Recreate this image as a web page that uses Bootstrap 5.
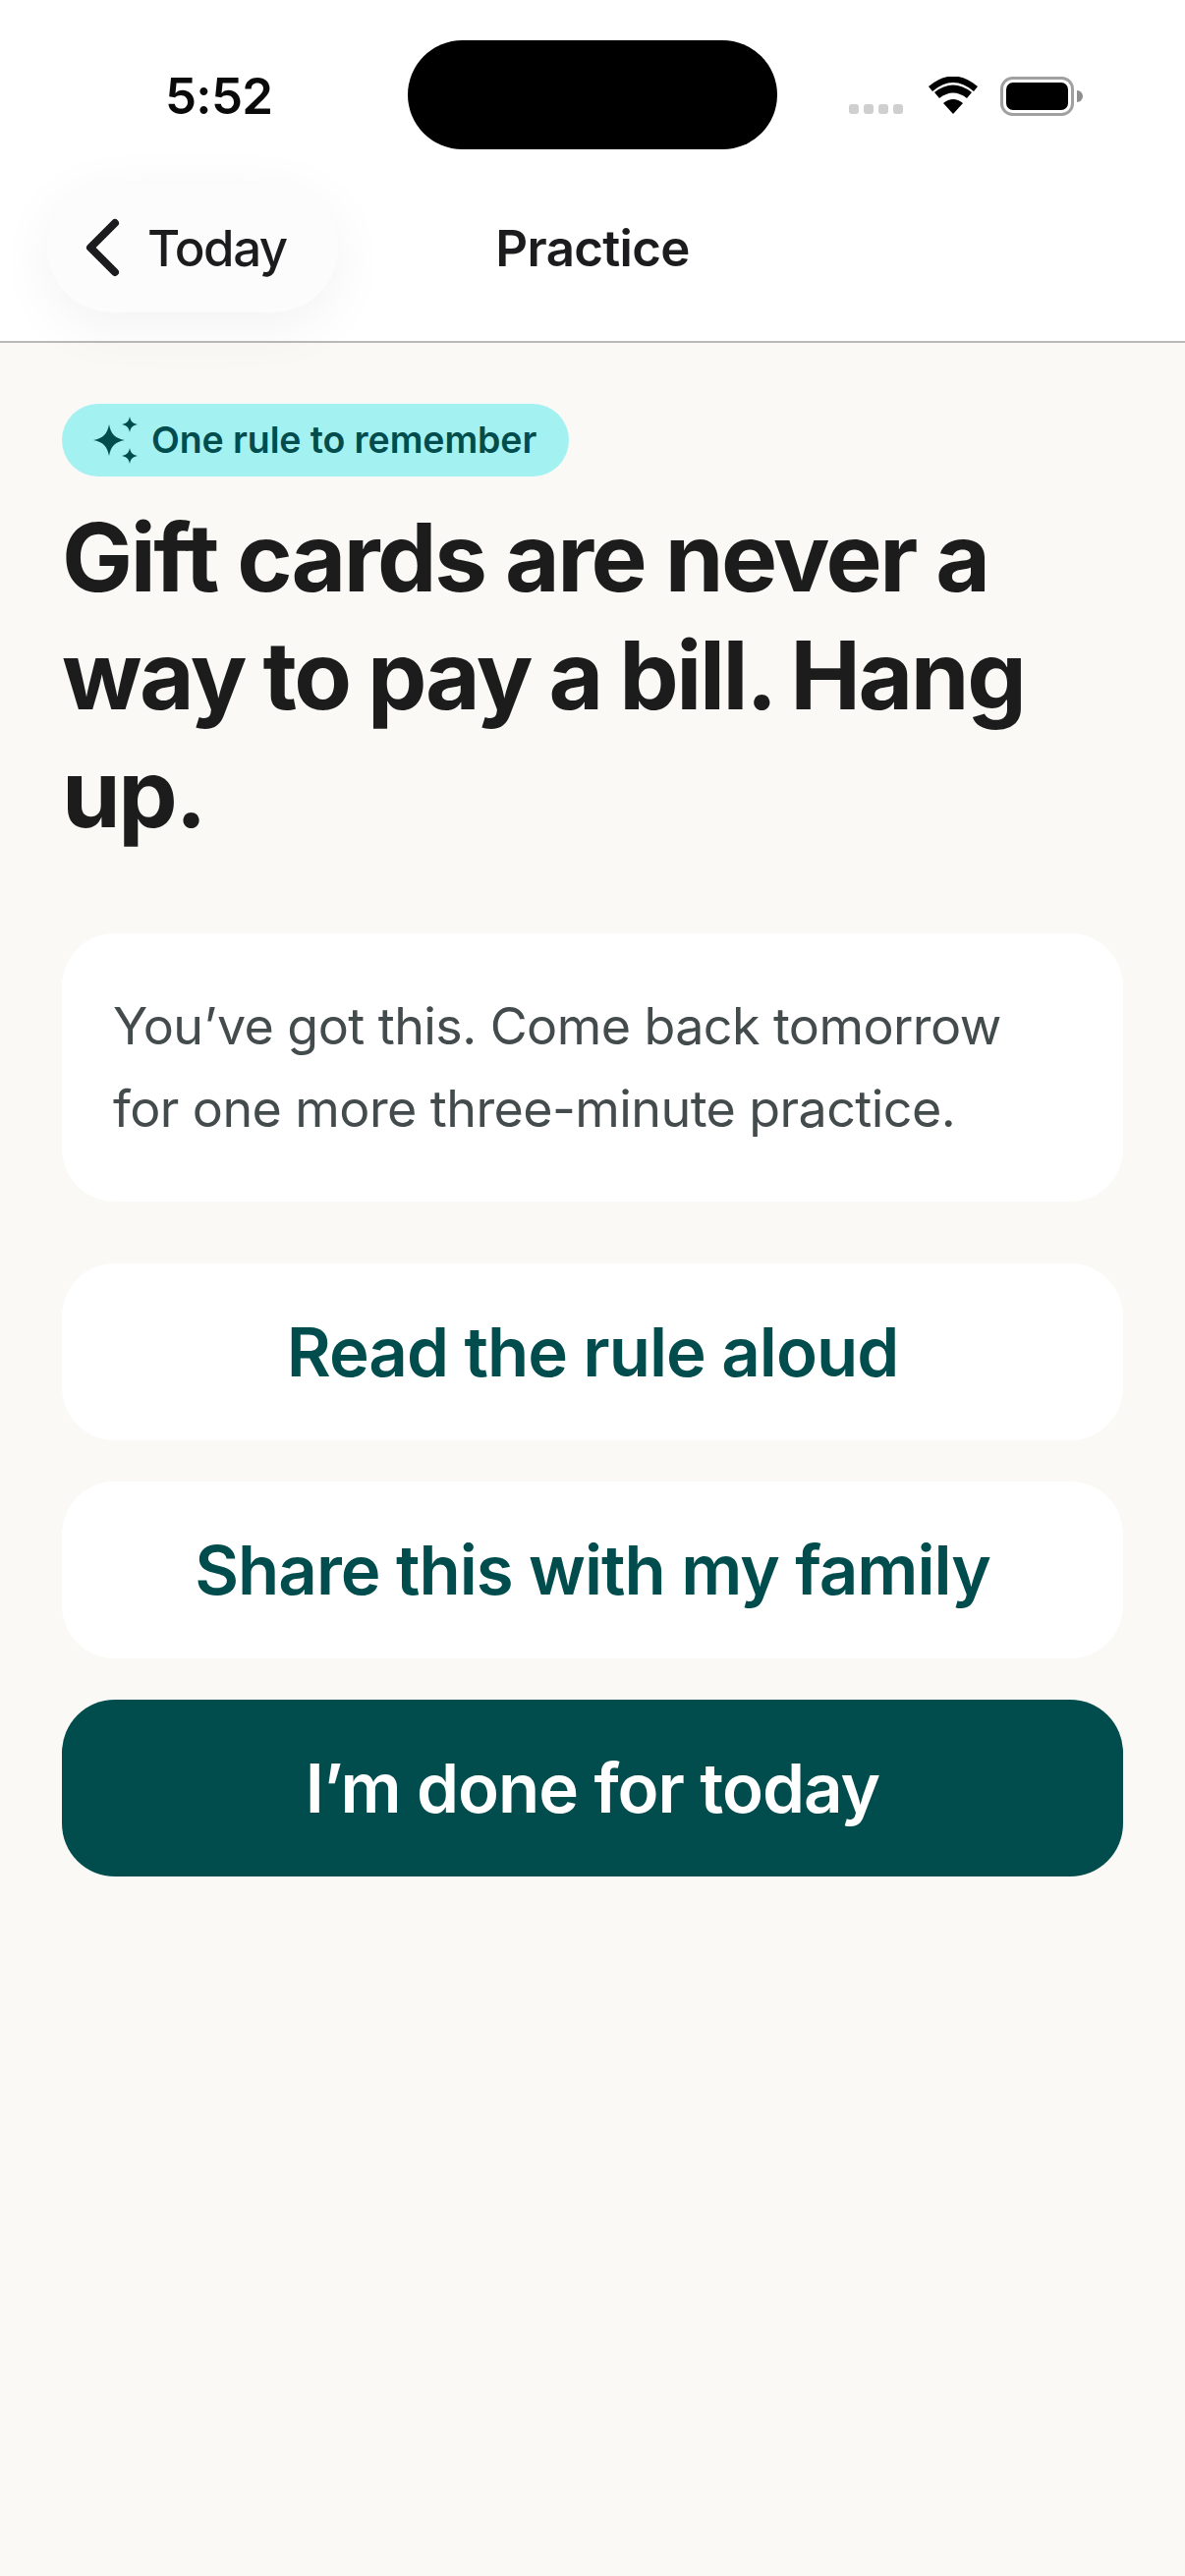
<!DOCTYPE html>
<html lang="en"><head><meta charset="utf-8"><title>Practice</title>
<link href="https://cdn.jsdelivr.net/npm/bootstrap@5.3.0/dist/css/bootstrap.min.css" rel="stylesheet">
<style>
html,body{height:100%}
body{background:#faf9f6;font-family:Inter,"Liberation Sans",sans-serif;color:#1c1c1e}
.hdr{background:#fff;height:349px;border-bottom:2px solid #b9b9b9}
.stat{height:186px;padding-top:41px}
.stat-l{width:415px;padding-left:168px;font-size:51px;font-weight:600;line-height:114px;color:#0a0a0a;letter-spacing:-.7px}
.isl{width:376px;height:111px;background:#000;border-radius:56px}
.stat-r{padding-left:73px;height:111px;padding-top:37px}
.dots{gap:5px;margin-top:28px;margin-right:25px}
.dots i{display:block;width:10px;height:10px;border-radius:3px;background:#cfcfcf}
.wifi{margin-right:22px}
.navr{display:grid;grid-template-columns:1fr auto 1fr;align-items:center;padding:0 48px}
.back{width:296px;height:132px;border-radius:66px;background:#fcfcfc;box-shadow:0 14px 60px rgba(0,0,0,.055);padding-left:38px;gap:28px;font-size:51px;font-weight:500;color:#1c1c1e;letter-spacing:-1.5px}
.back span,.ttl{padding-top:3px}
.ttl{font-size:51px;font-weight:600;letter-spacing:-.7px}
.wrap{padding:62px 63px 0}
.chip{height:74px;border-radius:37px;background:#a4f1f2;color:#014c4d;font-size:37.5px;font-weight:600;padding:0 32px;gap:11px;width:516px;letter-spacing:-.1px}
.head{font-size:96px;line-height:120px;font-weight:700;margin:22px 0 83px;letter-spacing:-2.4px;color:#1c1c1c}
.tight{word-spacing:-2px}
.note{background:#fff;border-radius:54px;padding:53px 52px 0;height:273px;font-size:52px;line-height:84px;color:#434b4d;margin-bottom:63px;letter-spacing:-.58px}
.acts{gap:42px}
.act{height:180px;border-radius:54px;font-size:69px;font-weight:600;letter-spacing:-1px;background:#fff;color:#014c4d;border:0;width:100%;padding:2px 0 0}
.act:hover{background:#fff;color:#014c4d}
.act-main,.act-main:hover{background:#014c4d;color:#fff}
</style></head>
<body>
<div class="hdr">
 <div class="stat d-flex align-items-start">
  <div class="stat-l">5:52</div>
  <div class="isl"></div>
  <div class="stat-r d-flex align-items-start">
   <div class="dots d-flex"><i></i><i></i><i></i><i></i></div>
   <svg width="52" height="38" viewBox="0 0 52 38" class="wifi"><path d="M26 38 16 27Q26 19 36 27ZM12 22 7 16Q26 1 45 16L40 22Q26 11 12 22Z" fill="#000"/><path d="M1 10 Q26 -11 51 10L47 15Q26 -3 5 15Z" fill="#000"/></svg>
   <svg width="84" height="40" viewBox="0 0 84 40"><rect x="1.500" y="1.500" width="72" height="37" rx="11" fill="none" stroke="#a0a0a0" stroke-width="3"/><rect x="6" y="6" width="63" height="28" rx="7" fill="#000"/><path d="M78 14a6 6 0 0 1 0 12Z" fill="#8e8e8e"/></svg>
  </div>
 </div>
 <div class="navr">
  <a class="back d-flex align-items-center text-decoration-none">
   <svg width="36" height="60" viewBox="0 0 36 60"><path d="M31 5 6 30l25 25" fill="none" stroke="#1c1c1e" stroke-width="8" stroke-linecap="round" stroke-linejoin="round"/></svg>
   <span>Today</span>
  </a>
  <div class="ttl">Practice</div>
  <div></div>
 </div>
</div>
<main class="wrap">
 <div class="chip d-flex align-items-center">
  <svg width="48" height="48" viewBox="0 0 48 48" class="flex-shrink-0"><path fill="#014c4d" d="M16 8c2 10 6 14 16 16-10 2-14 6-16 16-2-10-6-14-16-16 10-2 14-6 16-16ZM37 0c1 5 3 7 8 8-5 1-7 3-8 8-1-5-3-7-8-8 5-1 7-3 8-8ZM37 32c1 5 3 7 8 8-5 1-7 3-8 8-1-5-3-7-8-8 5-1 7-3 8-8Z"/></svg>
  <span class="text-nowrap">One rule to remember</span>
 </div>
 <h1 class="head"><span class="d-block">Gift cards are never a</span><span class="d-block tight">way to pay a bill. Hang</span><span class="d-block">up.</span></h1>
 <div class="note">You’ve got this. Come back tomorrow for one more three-minute practice.</div>
 <div class="acts d-flex flex-column">
  <button class="btn act">Read the rule aloud</button>
  <button class="btn act">Share this with my family</button>
  <button class="btn act act-main">I’m done for today</button>
 </div>
</main>
</body></html>
